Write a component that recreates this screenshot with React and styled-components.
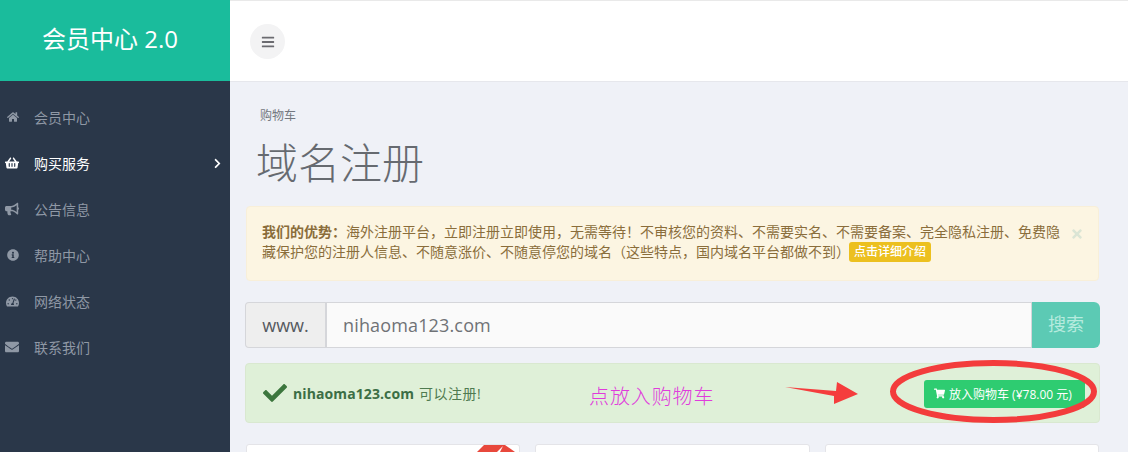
import React from 'react';
import styled, { createGlobalStyle } from 'styled-components';
import { FaHome, FaShoppingBasket, FaBullhorn, FaInfoCircle, FaTachometerAlt, FaEnvelope, FaCheck, FaShoppingCart, FaBars, FaChevronRight, FaTimes } from 'react-icons/fa';

const FONT = '"Open Sans", "Noto Sans CJK SC", sans-serif';

const Global = createGlobalStyle`
  html, body { margin: 0; padding: 0; height: 100%; overflow: hidden; background: #eff1f7; }
  body { font-family: ${FONT}; }
  * { box-sizing: border-box; }
`;

const Page = styled.div`
  width: 1128px; height: 452px; display: flex; overflow: hidden; position: relative;
`;
const Sidebar = styled.aside`
  width: 230px; flex: none; background: #2a3749; display: flex; flex-direction: column;
`;
const Brand = styled.div`
  height: 81px; background: #1abc9c; color: #fff; font-size: 24px; line-height: 78px; text-align: center;
  padding-right: 10px;
`;
const Nav = styled.nav`
  padding-top: 13px; display: flex; flex-direction: column;
`;
const NavItem = styled.div`
  height: 46px; display: flex; align-items: center; position: relative; padding-left: 5px;
  font-size: 14px; color: ${p => (p.$active ? '#fff' : '#8f98a5')};
`;
const NavIcon = styled.span`
  width: 29px; display: flex; align-items: center; font-size: ${p => p.$size || 13}px;
  padding-left: ${p => p.$indent || 0}px;
  color: ${p => (p.$active ? '#fff' : '#8f98a5')};
`;
const NavArrow = styled.span`
  position: absolute; right: 7px; top: 18px; font-size: 11px; color: #fff; display: flex;
`;
const Main = styled.main`
  flex: 1; min-width: 0; display: flex; flex-direction: column;
`;
const Topbar = styled.header`
  height: 82px; flex: none; background: #fff; border-top: 1px solid #e9e9e9; border-bottom: 1px solid #e6e7ec;
  padding: 23px 20px 0;
`;
const MenuButton = styled.div`
  width: 35px; height: 35px; border-radius: 50%; background: #f3f3f4; color: #6b6b70;
  display: flex; align-items: center; justify-content: center; font-size: 14px;
`;
const Content = styled.div`
  padding: 0 28px 0 15px; display: flex; flex-direction: column;
`;
const Crumb = styled.div`
  font-size: 12px; color: #737880; line-height: 16px; margin: 26px 0 0 15px;
`;
const Title = styled.h1`
  font-size: 42px; font-weight: 300; color: #666a70; line-height: 56px; margin: 11px 0 0 11px;
`;
const Notice = styled.div`
  margin: 15px 0 0 1px; height: 75px; width: 853px; background: #fcf5e2; border: 1px solid #f8efd9; border-radius: 4px;
  padding: 15px 37px 0 15px; color: #8a6d3b; font-size: 14px; line-height: 20px; position: relative;
`;
const NoticeLead = styled.strong`
  font-weight: 700;
`;
const Pill = styled.span`
  display: inline-block; background: #ecc01f; color: #fff; font-size: 12px; line-height: 20px; height: 20px;
  padding: 0 5px; border-radius: 3px; margin-left: -1px; vertical-align: 1px; font-weight: 500;
`;
const Close = styled.span`
  position: absolute; right: 14px; top: 20px; color: #dbe5d5; font-size: 14px; display: flex;
`;
const Search = styled.div`
  margin-top: 21px; height: 46px; width: 855px; display: flex;
`;
const Prefix = styled.div`
  width: 82px; background: #eeeeee; border: 1px solid #d5d6da; border-right-width: 2px; color: #55595f;
  font-size: 18px; line-height: 44px; text-align: center; border-radius: 4px 0 0 4px;
`;
const Field = styled.div`
  flex: 1; background: #fafafa; border: 1px solid #d5d6da; border-left: 0; color: #6f7276;
  font-size: 18px; line-height: 44px; padding-left: 16px; letter-spacing: 0.15px;
`;
const SearchButton = styled.div`
  width: 68px; background: #5ccab4; color: #b6ebde; font-size: 18px; line-height: 45px; text-align: center;
  border-radius: 0 6px 6px 0;
`;
const Result = styled.div`
  margin-top: 15px; width: 855px; height: 60px; background: #dff0d8; border: 1px solid #d9e8d0; border-radius: 4px;
  display: flex; align-items: center; padding: 0 14px 0 17px;
`;
const Check = styled.span`
  color: #3c763d; font-size: 24px; display: flex; margin-right: 6px;
`;
const Domain = styled.strong`
  color: #3c6e45; font-size: 14px; font-weight: 700; margin-right: 5px; letter-spacing: 0.1px;
`;
const Available = styled.span`
  color: #4f7a50; font-size: 14px; letter-spacing: 0.5px;
`;
const CartButton = styled.div`
  margin-left: auto; margin-top: 1px; height: 28px; width: 161px; flex: none; background: #2ecc71; color: #fff; border-radius: 3px;
  font-size: 12px; display: flex; align-items: center; gap: 4px; padding-left: 10px; white-space: nowrap;
  svg { flex: none; }
`;
const Cards = styled.div`
  margin-top: 21px; width: 853px; margin-left: 1px; display: flex; gap: 15px;
`;
const Card = styled.div`
  flex: 1; height: 40px; background: #fff; border: 1px solid #e4e4e8; border-radius: 3px;
`;
const Callout = styled.span`
  position: absolute; left: 589px; top: 382px; color: #e03cdc; font-size: 20px; line-height: 30px; font-weight: 300;
  letter-spacing: 0.9px;
`;
const Overlay = styled.svg`
  position: absolute; left: 0; top: 0; pointer-events: none;
`;

const items = [
  { icon: <FaHome />, label: '会员中心', size: 12, indent: 2 },
  { icon: <FaShoppingBasket />, label: '购买服务', active: true, size: 14 },
  { icon: <FaBullhorn />, label: '公告信息', size: 14 },
  { icon: <FaInfoCircle />, label: '帮助中心', size: 12, indent: 2 },
  { icon: <FaTachometerAlt />, label: '网络状态', size: 13, indent: 1 },
  { icon: <FaEnvelope />, label: '联系我们', size: 14 },
];

export default function App() {
  return (
    <Page>
      <Global />
      <Sidebar>
        <Brand>会员中心 2.0</Brand>
        <Nav>
          {items.map(it => (
            <NavItem key={it.label} $active={it.active}>
              <NavIcon $active={it.active} $size={it.size} $indent={it.indent}>{it.icon}</NavIcon>
              {it.label}
              {it.active && <NavArrow><FaChevronRight /></NavArrow>}
            </NavItem>
          ))}
        </Nav>
      </Sidebar>
      <Main>
        <Topbar><MenuButton><FaBars /></MenuButton></Topbar>
        <Content>
          <Crumb>购物车</Crumb>
          <Title>域名注册</Title>
          <Notice>
            <NoticeLead>我们的优势：</NoticeLead>海外注册平台，立即注册立即使用，无需等待！不审核您的资料、不需要实名、不需要备案、完全隐私注册、免费隐藏保护您的注册人信息、不随意涨价、不随意停您的域名（这些特点，国内域名平台都做不到）
            <Pill>点击详细介绍</Pill>
            <Close><FaTimes /></Close>
          </Notice>
          <Search>
            <Prefix>www.</Prefix>
            <Field>nihaoma123.com</Field>
            <SearchButton>搜索</SearchButton>
          </Search>
          <Result>
            <Check><FaCheck /></Check>
            <Domain>nihaoma123.com</Domain>
            <Available>可以注册!</Available>
            <CartButton><FaShoppingCart size={11} />放入购物车 (¥78.00 元)</CartButton>
          </Result>
          <Cards>
            <Card /><Card /><Card />
          </Cards>
        </Content>
      </Main>
      <Callout>点放入购物车</Callout>
      <Overlay width="1128" height="452" viewBox="0 0 1128 452">
        <polygon points="785,387 836,391 837,382 858,394 834,404 834,396" fill="#f53d3d" />
        <ellipse cx="993.5" cy="391.5" rx="100.5" ry="28.5" fill="none" stroke="#f33c3c" strokeWidth="6" />
        <path d="M477 452 L484 445 L505 445 L515 452 Z" fill="#e8483c" />
        <path d="M497 452 L503 446 L500 452 Z" fill="#fff" />
      </Overlay>
    </Page>
  );
}
